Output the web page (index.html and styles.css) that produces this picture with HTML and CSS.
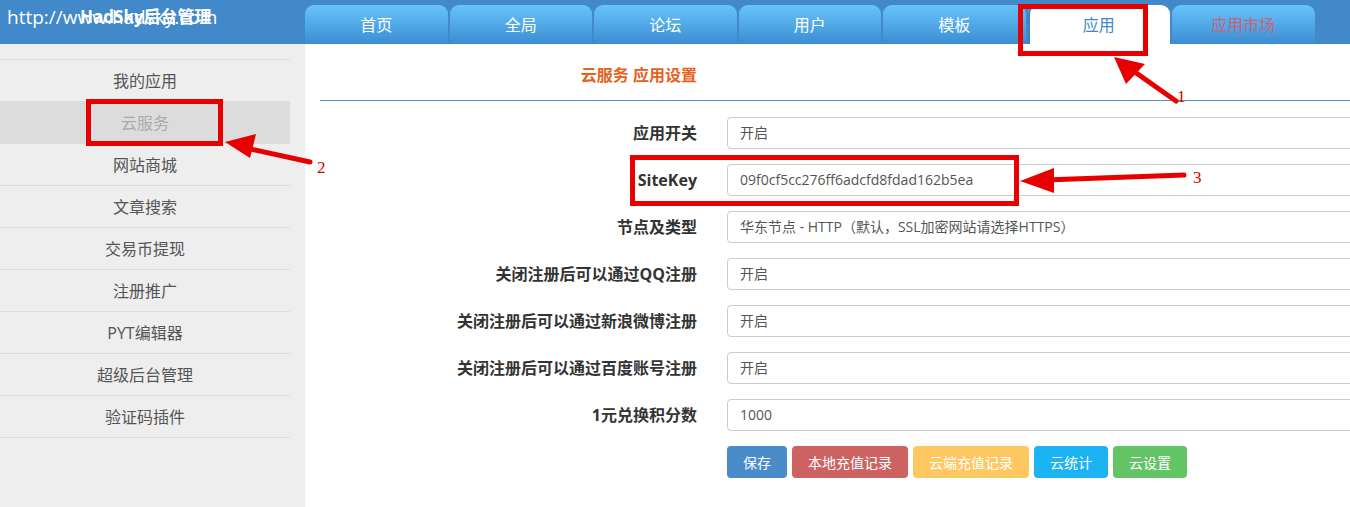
FILE: index.html
```html
<!DOCTYPE html>
<html lang="zh-CN">
<head>
    <meta charset="UTF-8">
    <title>HadSky后台管理</title>
    <link rel="stylesheet" href="styles.css">
</head>
<body>
    <div class="header">
        <div class="brand">
            <span class="brand-url">http://www.hadsky.com</span>
            <span class="brand-name">HadSky后台管理</span>
        </div>
        <ul class="tabs">
            <li class="tab">首页</li>
            <li class="tab">全局</li>
            <li class="tab">论坛</li>
            <li class="tab">用户</li>
            <li class="tab">模板</li>
            <li class="tab active">应用</li>
            <li class="tab market">应用市场</li>
        </ul>
    </div>

    <div class="layout">
        <div class="sidebar">
            <ul class="menu">
                <li>我的应用</li>
                <li class="active">云服务</li>
                <li>网站商城</li>
                <li>文章搜索</li>
                <li>交易币提现</li>
                <li>注册推广</li>
                <li>PYT编辑器</li>
                <li>超级后台管理</li>
                <li>验证码插件</li>
            </ul>
        </div>

        <div class="main">
            <div class="title-row">
                <h3>云服务 应用设置</h3>
            </div>
            <form class="form">
                <label>应用开关</label>
                <div class="field">开启</div>

                <label>SiteKey</label>
                <div class="field">09f0cf5cc276ff6adcfd8fdad162b5ea</div>

                <label>节点及类型</label>
                <div class="field">华东节点 - HTTP（默认，SSL加密网站请选择HTTPS）</div>

                <label>关闭注册后可以通过QQ注册</label>
                <div class="field">开启</div>

                <label>关闭注册后可以通过新浪微博注册</label>
                <div class="field">开启</div>

                <label>关闭注册后可以通过百度账号注册</label>
                <div class="field">开启</div>

                <label>1元兑换积分数</label>
                <div class="field">1000</div>

                <div class="buttons">
                    <button type="button" class="btn btn-blue">保存</button>
                    <button type="button" class="btn btn-red">本地充值记录</button>
                    <button type="button" class="btn btn-yellow">云端充值记录</button>
                    <button type="button" class="btn btn-cyan">云统计</button>
                    <button type="button" class="btn btn-green">云设置</button>
                </div>
            </form>
        </div>
    </div>

    <!-- screenshot annotations -->
    <svg class="marks" width="1350" height="507" viewBox="0 0 1350 507">
        <g fill="none" stroke="#e60000" stroke-width="5">
            <rect x="1020.5" y="6.5" width="125" height="47"/>
            <rect x="88.5" y="101.5" width="132" height="42"/>
            <rect x="632.5" y="157.5" width="384" height="46"/>
        </g>
        <g stroke="#e60000" stroke-width="5" stroke-linecap="round">
            <line x1="1176" y1="101" x2="1132" y2="70"/>
            <line x1="310" y1="162" x2="246" y2="148"/>
            <line x1="1184" y1="175" x2="1045" y2="180"/>
        </g>
        <g fill="#e60000">
            <polygon points="1114,57 1145,64 1126,84"/>
            <polygon points="225,142 256,134 250,158"/>
            <polygon points="1020,181 1054,168 1054,193"/>
        </g>
        <g class="mark-num" fill="#d40000">
            <text x="1177" y="102">1</text>
            <text x="317" y="173">2</text>
            <text x="1193" y="183">3</text>
        </g>
    </svg>
</body>
</html>
```

FILE: styles.css
```css
body {
    margin: 0;
    width: 1350px;
    height: 507px;
    overflow: hidden;
    position: relative;
    font-family: "Open Sans", "Noto Sans CJK SC", sans-serif;
    background-color: #fff;
}
ul {
    list-style: none;
    margin: 0;
    padding: 0;
}
.header {
    display: flex;
    height: 44px;
    background-color: #4189c9;
}
.brand {
    width: 305px;
    flex-shrink: 0;
    position: relative;
    color: #fff;
}
.brand-url {
    position: absolute;
    left: 7px;
    top: 4px;
    font-size: 19px;
    line-height: 26px;
}
.brand-name {
    position: absolute;
    left: 80px;
    top: 5px;
    font-size: 17px;
    line-height: 24px;
    font-weight: bold;
}
.tabs {
    display: flex;
    gap: 2px;
    padding-top: 5px;
}
.tab {
    width: 142.5px;
    height: 39px;
    line-height: 40px;
    text-align: center;
    font-size: 16px;
    color: #fff;
    border-radius: 9px 9px 0 0;
    background: linear-gradient(#67c4fa, #3b8dd3);
}
.tab.active {
    background: #fff;
    color: #3f87c8;
    box-shadow: inset 2px 0 0 #3a82c2;
}
.tab.market {
    color: #c96478;
}
.layout {
    display: flex;
    height: 463px;
}
.sidebar {
    width: 305px;
    flex-shrink: 0;
    background-color: #eee;
    padding-top: 15px;
}
.menu {
    width: 290px;
    border-top: 1px solid #ddd;
}
.menu li {
    height: 41px;
    line-height: 43px;
    border-bottom: 1px solid #ddd;
    text-align: center;
    font-size: 16px;
    color: #555;
}
.menu li.active {
    background-color: #dcdcdc;
    color: #aaa;
}
.main {
    flex: 1;
    padding-left: 15px;
    overflow: hidden;
}
.title-row {
    box-sizing: border-box;
    height: 57px;
    padding-top: 20px;
    border-bottom: 1px solid #5b8fc0;
}
.title-row h3 {
    width: 377px;
    margin: 0;
    text-align: right;
    font-size: 16px;
    line-height: 22px;
    color: #e5611c;
}
.form {
    display: grid;
    grid-template-columns: 377px 760px;
    column-gap: 30px;
    row-gap: 15px;
    padding-top: 16px;
}
.form label {
    text-align: right;
    font-size: 16px;
    font-weight: bold;
    color: #333;
    line-height: 32px;
}
.field {
    box-sizing: border-box;
    height: 32px;
    line-height: 30px;
    padding-left: 12px;
    border: 1px solid #ccc;
    border-radius: 4px;
    font-size: 14px;
    color: #555;
}
.buttons {
    grid-column: 2;
    display: flex;
    gap: 5px;
}
.btn {
    height: 32px;
    padding: 0 16px;
    border: none;
    border-radius: 4px;
    font-family: inherit;
    font-size: 14px;
    color: #fff;
}
.btn-blue {
    background-color: #4a8bc9;
}
.btn-red {
    background-color: #cd6262;
}
.btn-yellow {
    background-color: #fdc862;
}
.btn-cyan {
    background-color: #1cb3f2;
}
.btn-green {
    background-color: #63c466;
}
.marks {
    position: absolute;
    left: 0;
    top: 0;
    pointer-events: none;
}
.mark-num {
    font-family: "Liberation Serif", serif;
    font-size: 17px;
}
```
